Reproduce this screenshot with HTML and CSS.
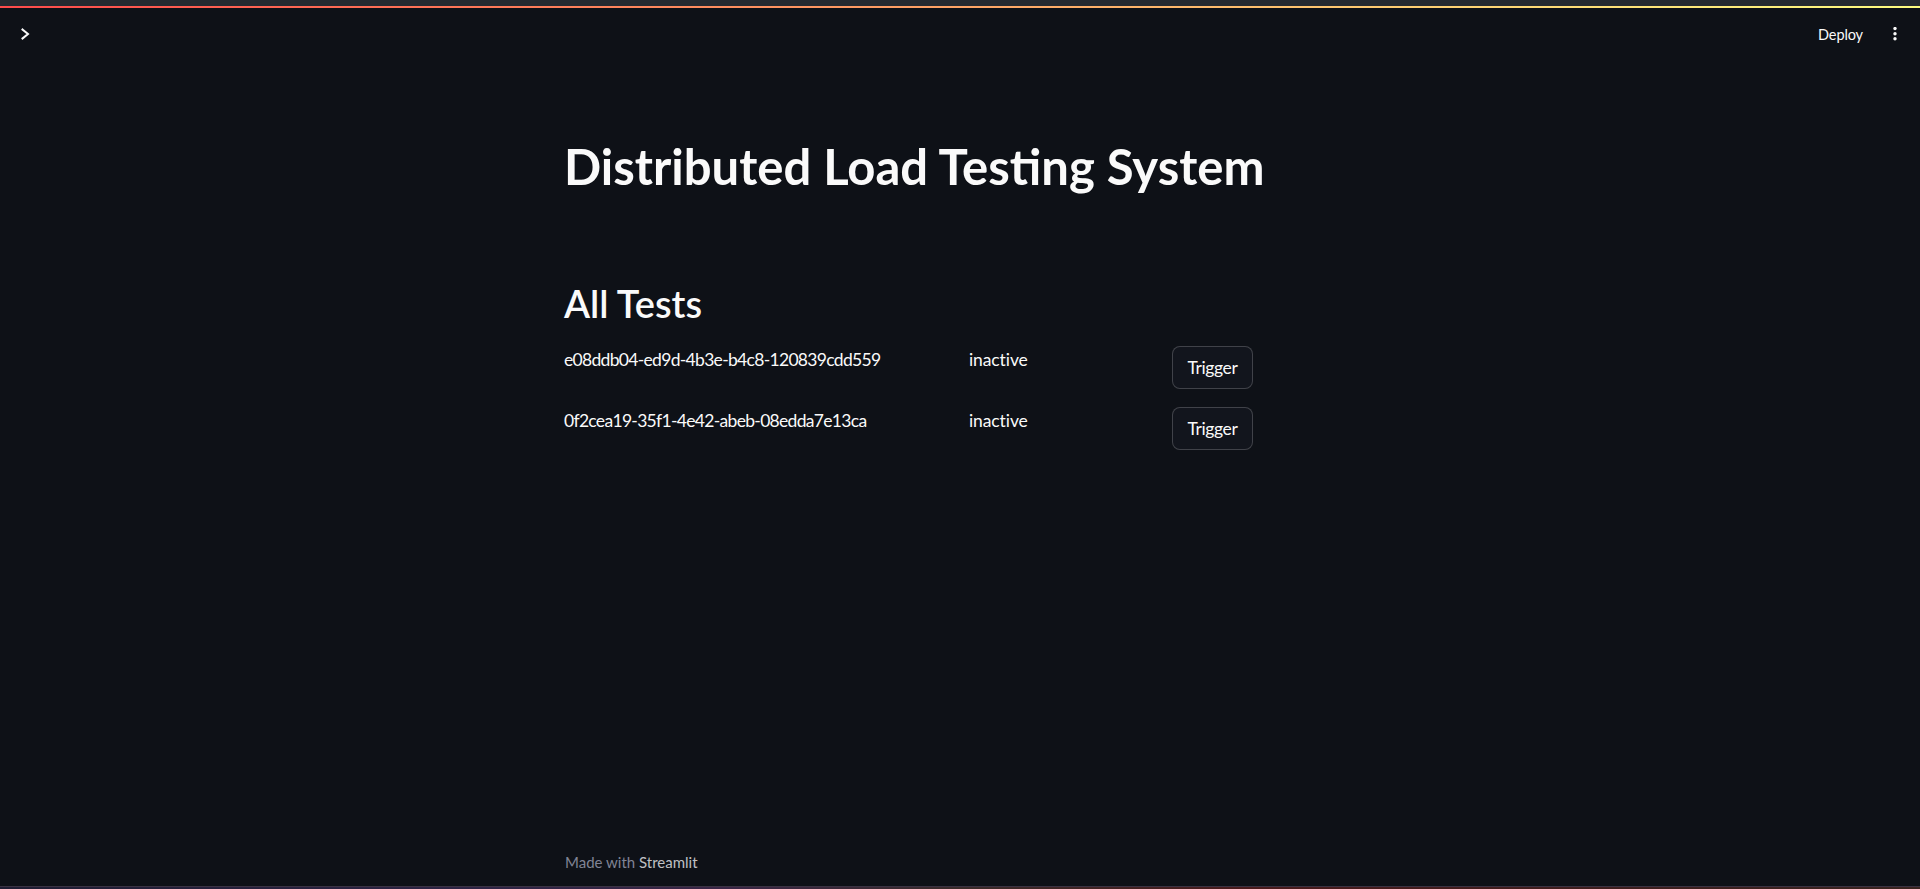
FILE: index.html
```html
<!DOCTYPE html>
<html lang="en">
<head>
<meta charset="utf-8">
<title>Distributed Load Testing System</title>
<link rel="stylesheet" href="styles.css">
</head>
<body>
<header class="app-header">
  <div class="browser-strip"></div>
  <div class="decoration"></div>
  <div class="toolbar">
    <button class="sidebar-toggle" aria-label="Open sidebar">
      <svg width="16" height="16" viewBox="0 0 16 16"><polyline points="5.5,3.5 11,8 5.5,12.5" fill="none" stroke="#fafafa" stroke-width="2" stroke-linecap="square" stroke-linejoin="miter"/></svg>
    </button>
    <div class="toolbar-actions">
      <span class="deploy">Deploy</span>
      <svg class="menu" width="4" height="14" viewBox="0 0 4 14"><circle cx="2" cy="1.6" r="1.7" fill="#fafafa"/><circle cx="2" cy="6.7" r="1.7" fill="#fafafa"/><circle cx="2" cy="11.8" r="1.7" fill="#fafafa"/></svg>
    </div>
  </div>
</header>
<main class="main">
  <h1 class="title">Distributed Load Testing System</h1>
  <h2 class="subtitle">All Tests</h2>
  <div class="tests">
    <div class="test-row">
      <div class="test-id">e08ddb04-ed9d-4b3e-b4c8-120839cdd559</div>
      <div class="test-status">inactive</div>
      <div><button class="btn">Trigger</button></div>
    </div>
    <div class="test-row">
      <div class="test-id">0f2cea19-35f1-4e42-abeb-08edda7e13ca</div>
      <div class="test-status">inactive</div>
      <div><button class="btn">Trigger</button></div>
    </div>
  </div>
</main>
<footer class="footer">
  <span class="made">Made with </span><span class="brand">Streamlit</span>
</footer>
<div class="bottom-strip"></div>
</body>
</html>
```
FILE: styles.css
```css
html, body {
  margin: 0;
  padding: 0;
  height: 100%;
}
body {
  background: #0e1117;
  color: #fafafa;
  font-family: "Lato", "Liberation Sans", sans-serif;
  display: flex;
  flex-direction: column;
  min-height: 100vh;
  overflow: hidden;
}
.browser-strip {
  height: 6px;
  background: #262a30;
}
.decoration {
  height: 2px;
  background: linear-gradient(90deg, #ff4b4b, #fffd80);
}
.toolbar {
  height: 52px;
  display: flex;
  align-items: center;
  justify-content: space-between;
}
.sidebar-toggle {
  background: none;
  border: 0;
  padding: 0;
  margin-left: 17px;
  width: 16px;
  height: 16px;
  display: flex;
}
.toolbar-actions {
  display: flex;
  align-items: center;
  gap: 30px;
  padding-right: 23px;
}
.deploy {
  font-size: 14.5px;
  color: #fafafa;
  letter-spacing: -0.1px;
}
.menu {
  display: block;
}
.main {
  padding: 77px 0 0 564px;
  width: 792px;
}
.title {
  margin: 0;
  font-size: 49px;
  line-height: 1.2;
  font-weight: 700;
  letter-spacing: 0;
}
.subtitle {
  margin: 85px 0 0;
  font-size: 38px;
  line-height: 1.2;
  font-weight: 600;
  letter-spacing: 0;
}
.tests {
  margin-top: 20px;
  display: flex;
  flex-direction: column;
  gap: 18px;
}
.test-row {
  display: grid;
  grid-template-columns: 405px 203px 1fr;
  align-items: start;
}
.test-id, .test-status {
  font-size: 17.5px;
  line-height: 27px;
  letter-spacing: -0.69px;
}
.test-status {
  letter-spacing: -0.1px;
}
.btn {
  font-family: inherit;
  font-size: 17.5px;
  color: #fafafa;
  background: #12151d;
  border: 1px solid rgba(250, 250, 250, 0.2);
  border-radius: 8px;
  width: 81px;
  height: 43px;
  padding: 0;
  letter-spacing: -0.4px;
  line-height: 1;
}
.footer {
  margin-top: auto;
  padding: 0 0 12px 565px;
  font-size: 15px;
  line-height: 24px;
}
.made {
  color: #808495;
}
.brand {
  color: #bfc0c4;
}
.bottom-strip {
  height: 2px;
  border-top: 1px solid #3a3342;
  background: linear-gradient(90deg, #1f1d33 0%, #2e2445 25%, #3a2646 38%, #3a2b2a 50%, #4a1a1c 65%, #3e1e1e 85%, #3a2420 100%);
}
```
